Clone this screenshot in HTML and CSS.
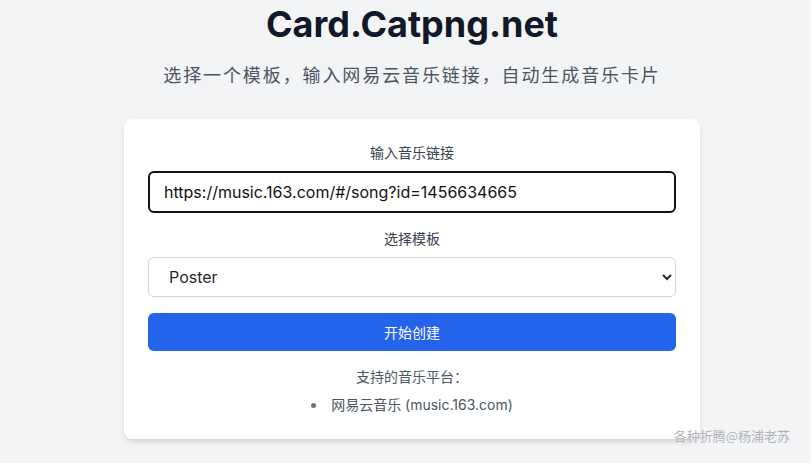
FILE: index.html
```html
<!DOCTYPE html>
<html lang="zh-CN">
<head>
<meta charset="utf-8">
<title>Card.Catpng.net</title>
<link rel="stylesheet" href="styles.css">
</head>
<body>
<main class="page">
  <h1 class="title">Card.Catpng.net</h1>
  <p class="subtitle">选择一个模板，输入网易云音乐链接，自动生成音乐卡片</p>
  <section class="card">
    <label class="label" for="url">输入音乐链接</label>
    <input id="url" class="input" type="text" value="https://music.163.com/#/song?id=1456634665">
    <label class="label" for="tpl">选择模板</label>
    <select id="tpl" class="select">
      <option>Poster</option>
    </select>
    <button class="btn" type="button">开始创建</button>
    <p class="support">支持的音乐平台：</p>
    <ul class="platforms">
      <li>网易云音乐 (music.163.com)</li>
    </ul>
  </section>
</main>
<div class="watermark">各种折腾@杨浦老苏</div>
</body>
</html>
```
FILE: styles.css
```css
* { box-sizing: border-box; }
html, body { margin: 0; padding: 0; }
body {
  background: #f3f4f6;
  font-family: Inter, "Noto Sans CJK SC", sans-serif;
  color: #111827;
  width: 811px;
  height: 463px;
  overflow: hidden;
  position: relative;
}
.page {
  display: flex;
  flex-direction: column;
  align-items: center;
  padding-top: 4px;
  padding-left: 13px;
}
.title {
  margin: 0 0 16px;
  font-size: 36px;
  line-height: 40px;
  font-weight: 700;
  color: #111827;
}
.subtitle {
  margin: 0 0 31px;
  font-family: "Noto Sans CJK SC", sans-serif;
  font-size: 18px;
  line-height: 28px;
  letter-spacing: 1.9px;
  color: #4b5563;
}
.card {
  width: 576px;
  background: #fff;
  border-radius: 8px;
  box-shadow: 0 4px 6px -1px rgba(0,0,0,0.1), 0 2px 4px -2px rgba(0,0,0,0.1);
  padding: 24px;
  display: flex;
  flex-direction: column;
  align-items: stretch;
}
.label {
  display: block;
  text-align: center;
  font-size: 14px;
  line-height: 20px;
  color: #374151;
  margin-bottom: 8px;
}
.input {
  display: block;
  width: 100%;
  height: 42px;
  border: 2px solid #111;
  border-radius: 6px;
  padding: 0 14px;
  font-family: Inter, sans-serif;
  font-size: 16px;
  color: #111;
  background: #fff;
  outline: none;
  margin-bottom: 16px;
}
.select {
  display: block;
  width: 100%;
  height: 40px;
  border: 1px solid #d1d5db;
  border-radius: 6px;
  padding: 0 12px 0 16px;
  font-family: Inter, sans-serif;
  font-size: 16px;
  color: #1f2937;
  background: #fff;
  margin-bottom: 16px;
}
.btn {
  display: block;
  width: 100%;
  height: 38px;
  border: 0;
  border-radius: 6px;
  background: #2563eb;
  color: #fff;
  font-family: Inter, "Noto Sans CJK SC", sans-serif;
  font-size: 14px;
}
.support {
  margin: 16px 0 0;
  text-align: center;
  font-size: 14px;
  line-height: 20px;
  color: #4b5563;
}
.platforms {
  margin: 8px 0 0;
  padding: 0;
  list-style: disc inside;
  text-align: center;
  font-size: 14px;
  line-height: 20px;
  color: #4b5563;
}
.platforms li::marker { color: #6b7280; }
.watermark {
  position: absolute;
  right: 21px;
  top: 427px;
  font-family: "Noto Sans CJK SC", sans-serif;
  font-size: 13px;
  line-height: 18px;
  color: #b0b3b8;
}
```
